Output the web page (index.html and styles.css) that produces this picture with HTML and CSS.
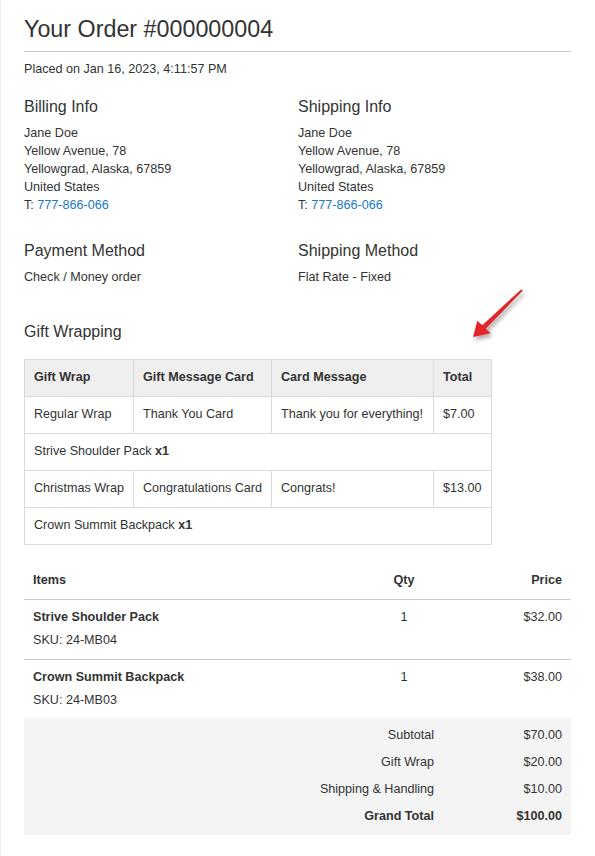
FILE: index.html
```html
<!DOCTYPE html>
<html lang="en">
<head>
    <meta charset="UTF-8">
    <meta name="viewport" content="width=device-width, initial-scale=1.0">
    <title>Your Order #000000004</title>
    <link rel="stylesheet" href="styles.css">
</head>
<body>
    <div class="order">
        <h1 class="order-title">Your Order #000000004</h1>
        <p class="order-date">Placed on Jan 16, 2023, 4:11:57 PM</p>

        <div class="info-grid">
            <div class="info-block">
                <h2>Billing Info</h2>
                <p>Jane Doe<br>Yellow Avenue, 78<br>Yellowgrad, Alaska, 67859<br>United States<br>T: <a href="#">777-866-066</a></p>
            </div>
            <div class="info-block">
                <h2>Shipping Info</h2>
                <p>Jane Doe<br>Yellow Avenue, 78<br>Yellowgrad, Alaska, 67859<br>United States<br>T: <a href="#">777-866-066</a></p>
            </div>
            <div class="info-block method">
                <h2>Payment Method</h2>
                <p>Check / Money order</p>
            </div>
            <div class="info-block method">
                <h2>Shipping Method</h2>
                <p>Flat Rate - Fixed</p>
            </div>
        </div>

        <h2 class="gift-title">Gift Wrapping</h2>
        <table class="gift-table">
            <colgroup>
                <col style="width: 109px">
                <col style="width: 138px">
                <col style="width: 162px">
                <col style="width: 58px">
            </colgroup>
            <thead>
                <tr>
                    <th>Gift Wrap</th>
                    <th>Gift Message Card</th>
                    <th>Card Message</th>
                    <th>Total</th>
                </tr>
            </thead>
            <tbody>
                <tr>
                    <td>Regular Wrap</td>
                    <td>Thank You Card</td>
                    <td>Thank you for everything!</td>
                    <td>$7.00</td>
                </tr>
                <tr>
                    <td colspan="4">Strive Shoulder Pack <b>x1</b></td>
                </tr>
                <tr>
                    <td>Christmas Wrap</td>
                    <td>Congratulations Card</td>
                    <td>Congrats!</td>
                    <td>$13.00</td>
                </tr>
                <tr>
                    <td colspan="4">Crown Summit Backpack <b>x1</b></td>
                </tr>
            </tbody>
        </table>

        <table class="items-table">
            <colgroup>
                <col>
                <col style="width: 80px">
                <col style="width: 127px">
            </colgroup>
            <thead>
                <tr>
                    <th class="col-name">Items</th>
                    <th class="col-qty">Qty</th>
                    <th class="col-price">Price</th>
                </tr>
            </thead>
            <tbody>
                <tr>
                    <td class="col-name"><b>Strive Shoulder Pack</b><span class="sku">SKU: 24-MB04</span></td>
                    <td class="col-qty">1</td>
                    <td class="col-price">$32.00</td>
                </tr>
                <tr>
                    <td class="col-name"><b>Crown Summit Backpack</b><span class="sku">SKU: 24-MB03</span></td>
                    <td class="col-qty">1</td>
                    <td class="col-price">$38.00</td>
                </tr>
            </tbody>
        </table>

        <div class="totals">
            <span>Subtotal</span><span>$70.00</span>
            <span>Gift Wrap</span><span>$20.00</span>
            <span>Shipping &amp; Handling</span><span>$10.00</span>
            <b>Grand Total</b><b>$100.00</b>
        </div>

        <!-- стрелка-указатель на таблицу подарочной упаковки -->
        <svg class="pointer" width="80" height="70" viewBox="0 0 80 70">
            <defs>
                <filter id="shadow" x="-30%" y="-30%" width="160%" height="160%">
                    <feDropShadow dx="2" dy="3" stdDeviation="2" flood-color="#000" flood-opacity="0.35"/>
                </filter>
            </defs>
            <path d="M13 57 L17.3 40.7 L22.3 45.2 L61.3 9.3 L62.7 10.7 L25.7 48.8 L30.7 53.3 Z" fill="#e1282c" filter="url(#shadow)"/>
        </svg>
    </div>
</body>
</html>
```

FILE: styles.css
```css
* {
    box-sizing: border-box;
}

body {
    margin: 0;
    min-height: 856px;
    border-left: 1px solid #f0f0f0;
    background: #fff;
    font-family: "Liberation Sans", Arial, sans-serif;
    font-size: 12.6px;
    line-height: 18px;
    color: #333;
}

.order {
    position: relative;
    padding: 14px 24px 20px 23px;
}

.order-title {
    margin: 0;
    padding-bottom: 7px;
    border-bottom: 1px solid #ccc;
    font-size: 23.3px;
    font-weight: normal;
    line-height: 30px;
}

.order-date {
    margin: 8px 0 0;
}

h2 {
    margin: 0;
    font-size: 16px;
    font-weight: normal;
    line-height: 20px;
}

.info-grid {
    display: grid;
    grid-template-columns: 274px 1fr;
    margin-top: 19px;
}

.info-block p {
    margin: 7px 0 0;
}

.info-block a {
    color: #1979c3;
    text-decoration: none;
}

.info-block.method {
    margin-top: 27px;
}

.gift-title {
    margin-top: 36px;
}

.gift-table {
    margin-top: 17px;
    border-collapse: collapse;
    table-layout: fixed;
    width: 467px;
}

.gift-table th,
.gift-table td {
    border: 1px solid #dadada;
    padding: 8px 9px 10px;
    text-align: left;
    white-space: nowrap;
}

.gift-table th {
    background: #efefef;
    font-weight: bold;
}

.items-table {
    margin-top: 16px;
    width: 100%;
    border-collapse: collapse;
    table-layout: fixed;
}

.items-table th {
    padding: 10px 9px;
    border-bottom: 1px solid #ccc;
    font-weight: bold;
}

.items-table td {
    padding: 8px 9px 10px;
    vertical-align: top;
}

.items-table tbody tr:first-child td {
    border-bottom: 1px solid #ccc;
}

.items-table tbody tr:last-child td {
    padding-bottom: 9px;
}

.col-name {
    text-align: left;
}

.col-qty {
    text-align: center;
}

.col-price {
    text-align: right;
}

.sku {
    display: block;
    margin-top: 5px;
}

.totals {
    display: grid;
    grid-template-columns: 1fr 128px;
    padding: 4px 9px 5px 0;
    background: #f4f4f4;
    line-height: 27px;
    text-align: right;
}

.pointer {
    position: absolute;
    left: 459px;
    top: 280px;
}
```
